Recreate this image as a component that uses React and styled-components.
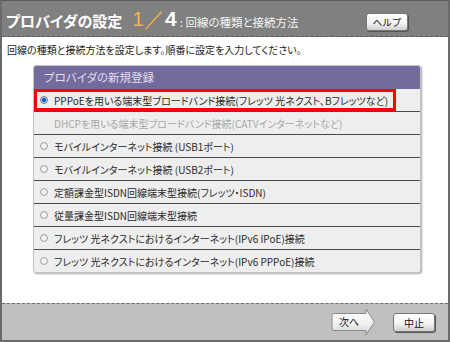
import React from "react";
import styled, { createGlobalStyle } from "styled-components";

const GlobalStyle = createGlobalStyle`
  html, body {
    margin: 0;
    padding: 0;
    background: #ffffff;
  }
  body {
    font-family: "Noto Sans CJK JP", "Noto Sans", sans-serif;
    font-feature-settings: "palt";
  }
`;

const options = [
  { id: "pppoe", label: "PPPoEを用いる端末型ブロードバンド接続(フレッツ 光ネクスト、Bフレッツなど)", selected: true },
  { id: "dhcp", label: "DHCPを用いる端末型ブロードバンド接続(CATVインターネットなど)", disabled: true },
  { id: "usb1", label: "モバイルインターネット接続 (USB1ポート)" },
  { id: "usb2", label: "モバイルインターネット接続 (USB2ポート)" },
  { id: "isdn1", label: "定額課金型ISDN回線端末型接続(フレッツ・ISDN)" },
  { id: "isdn2", label: "従量課金型ISDN回線端末型接続" },
  { id: "ipoe", label: "フレッツ 光ネクストにおけるインターネット(IPv6 IPoE)接続" },
  { id: "v6pppoe", label: "フレッツ 光ネクストにおけるインターネット(IPv6 PPPoE)接続" },
];

function App() {
  return (
    <>
      <GlobalStyle />
      <Window>
        <TitleBar>
          <Title>プロバイダの設定</Title>
          <Step>
            <Current>1／</Current>
            <Total>4</Total>
          </Step>
          <SubTitle>: 回線の種類と接続方法</SubTitle>
          <HelpButton>ヘルプ</HelpButton>
        </TitleBar>
        <Body>
          <Lead>回線の種類と接続方法を設定します。順番に設定を入力してください。</Lead>
          <Panel>
            <PanelHeader>プロバイダの新規登録</PanelHeader>
            {options.map((opt) => (
              <Row key={opt.id}>
                <Option $selected={opt.selected} $disabled={opt.disabled}>
                  {!opt.disabled && <Radio $checked={opt.selected} />}
                  {opt.label}
                </Option>
              </Row>
            ))}
          </Panel>
        </Body>
        <Footer>
          <NextButton>
            <svg width="45" height="28" viewBox="0 0 45 28">
              <defs>
                <linearGradient id="nextGrad" x1="0" y1="0" x2="0" y2="1">
                  <stop offset="0" stopColor="#ffffff" />
                  <stop offset="0.55" stopColor="#f2f2f2" />
                  <stop offset="1" stopColor="#cfcfcf" />
                </linearGradient>
              </defs>
              <path
                d="M3 5.5 H35 V1 L43.5 14 L35 27 V22.5 H3 Q1 22.5 1 20.5 V7.5 Q1 5.5 3 5.5 Z"
                fill="url(#nextGrad)"
                stroke="#8a8a8a"
                strokeWidth="1"
              />
            </svg>
            <ButtonText>次へ</ButtonText>
          </NextButton>
          <Button>中止</Button>
        </Footer>
      </Window>
    </>
  );
}

const Window = styled.div`
  width: 450px;
  height: 342px;
  box-sizing: border-box;
  border: 2px solid #6a6a6a;
  border-top: 1px solid #5a5a5a;
  display: flex;
  flex-direction: column;
  overflow: hidden;
`;

const TitleBar = styled.div`
  height: 35px;
  flex: none;
  background: #808080;
  border-bottom: 1px dashed #5e5e5e;
  display: flex;
  align-items: center;
  padding: 0 4px;
  color: #ffffff;
`;

const Title = styled.span`
  font-size: 15px;
  font-weight: 700;
  letter-spacing: 0;
  margin-top: 3px;
`;

const Step = styled.span`
  display: flex;
  align-items: baseline;
  margin-left: 10px;
  font-family: "Liberation Sans", Arial, sans-serif;
  font-size: 21px;
  margin-top: 1px;
`;

const Current = styled.span`
  color: #f3b347;
`;

const Total = styled.span`
  color: #ffffff;
  font-weight: 700;
`;

const SubTitle = styled.span`
  font-size: 11.5px;
  margin-left: 3px;
  margin-top: 6px;
  color: #f4f4f4;
`;

const HelpButton = styled.button`
  margin-left: auto;
  margin-right: 36px;
  margin-top: 6px;
  width: 42px;
  height: 18px;
  padding: 0;
  border: 1px solid #777;
  border-radius: 3px;
  background: linear-gradient(#ffffff, #f4f4f4 55%, #cfcfcf);
  box-shadow: 1px 1px 0 #555;
  font-family: inherit;
  font-size: 9.5px;
  color: #111;
`;

const Body = styled.div`
  flex: 1;
  background: #ffffff;
  padding: 6px 0 0 0;
`;

const Lead = styled.div`
  font-size: 10px;
  color: #222;
  padding-left: 5px;
  line-height: 14px;
`;

const Panel = styled.div`
  margin: 8px 0 0 31px;
  width: 386px;
  background: #eeeeee;
  border: 1px solid #c4c4c4;
  border-radius: 3px;
  box-shadow: 1px 1px 2px rgba(0, 0, 0, 0.35);
  overflow: hidden;
`;

const PanelHeader = styled.div`
  height: 23px;
  line-height: 23px;
  background: #736b9c;
  color: #e2def0;
  font-size: 11.5px;
  padding-left: 10px;
`;

const Row = styled.div`
  height: 22px;
  border-bottom: 1px solid #4a4a4a;
  display: flex;
  &:last-child {
    border-bottom: none;
  }
`;

const Option = styled.label`
  box-sizing: border-box;
  height: 22px;
  display: flex;
  align-items: center;
  gap: 6px;
  padding-right: 5px;
  padding-left: ${(p) => (p.$disabled ? "20px" : p.$selected ? "3px" : "6px")};
  border: ${(p) => (p.$selected ? "3px solid #ff0000" : "none")};
  font-size: 10px;
  color: ${(p) => (p.$disabled ? "#a8a8a8" : "#2a2a2a")};
  white-space: nowrap;
`;

const Radio = styled.span`
  width: 8px;
  height: 8px;
  flex: none;
  border-radius: 50%;
  box-sizing: border-box;
  border: 1px solid ${(p) => (p.$checked ? "#6f7f95" : "#a8a8a8")};
  background: ${(p) =>
    p.$checked
      ? "radial-gradient(circle, #1f5fb8 0 1.8px, #9fb9dd 2.4px, #e8eef7 3px)"
      : "radial-gradient(circle, #f4f4f4 0 2px, #dcdcdc 3px)"};
`;

const Footer = styled.div`
  height: 36px;
  flex: none;
  background: #c0c0c0;
  border-top: 1px dashed #6e6e6e;
  display: flex;
  align-items: center;
  justify-content: flex-end;
  gap: 17px;
  padding-right: 13px;
`;

const NextButton = styled.button`
  position: relative;
  width: 45px;
  height: 28px;
  padding: 0;
  border: none;
  background: none;
  svg {
    position: absolute;
    left: 0;
    top: 0;
  }
`;

const ButtonText = styled.span`
  position: relative;
  display: block;
  width: 36px;
  font-family: "Noto Sans CJK JP", sans-serif;
  font-size: 10px;
  color: #111;
  text-align: center;
  line-height: 28px;
`;

const Button = styled.button`
  width: 42px;
  height: 19px;
  padding: 0;
  border: 1px solid #777;
  border-radius: 3px;
  background: linear-gradient(#ffffff, #f4f4f4 55%, #cfcfcf);
  box-shadow: 1px 1px 0 #555;
  font-family: inherit;
  font-size: 10px;
  color: #111;
`;

export default App;
